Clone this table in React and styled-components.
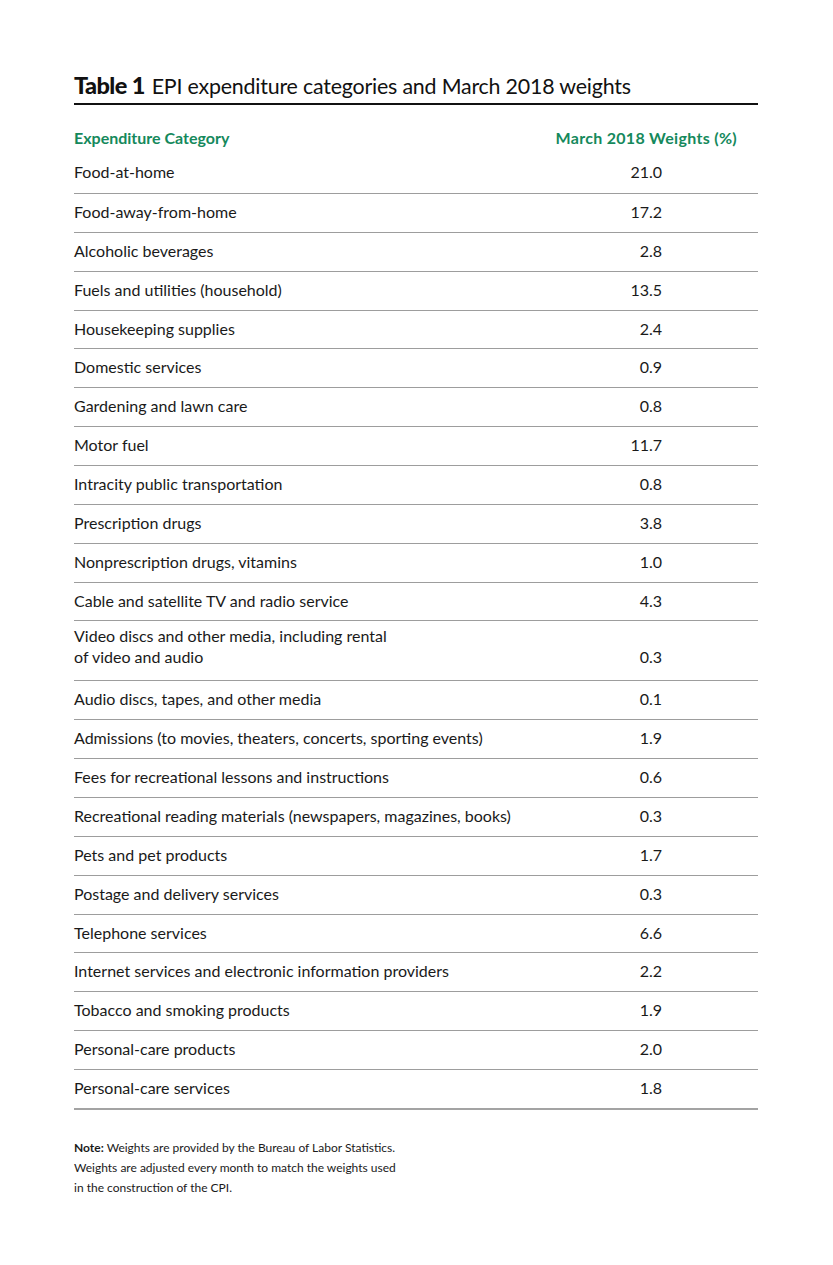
import React from "react";
import styled, { createGlobalStyle } from "styled-components";

const Global = createGlobalStyle`
  html, body { margin: 0; padding: 0; background: #fff; }
  body { font-family: Lato, "Open Sans", sans-serif; color: #1a1a1a; }
`;

const Page = styled.div`
  width: 833px;
  min-height: 1265px;
  box-sizing: border-box;
  padding: 70px 75px 0 74px;
`;

const Title = styled.h1`
  margin: 0;
  padding-bottom: 2px;
  border-bottom: 2px solid #111;
  font-size: 21.4px;
  line-height: 30px;
  font-weight: 400;
  color: #111;
  letter-spacing: -0.2px;
`;

const TitleLabel = styled.span`
  font-weight: 900;
  font-size: 23.5px;
  margin-right: 7px;
  letter-spacing: -0.6px;
`;

const Table = styled.div`
  display: flex;
  flex-direction: column;
  border-bottom: 2px solid #a3a3a3;
`;

const Row = styled.div`
  display: grid;
  grid-template-columns: 1fr 240px;
  align-items: ${(p) => (p.$tall ? "end" : "center")};
  min-height: ${(p) => (p.$header ? "46px" : p.$first ? "42px" : "38.86px")};
  padding: ${(p) =>
    p.$tall ? "4px 0 13px" : p.$header ? "18px 0 0" : p.$first ? "0 0 2px" : "0 0 3px"};
  border-top: ${(p) => (p.$first || p.$header ? "none" : "1px solid #9d9d9d")};
  font-size: 16px;
  line-height: 21px;
  box-sizing: border-box;
`;

const HeadCell = styled.div`
  color: #15895c;
  font-weight: 700;
  white-space: nowrap;
  text-align: ${(p) => (p.$num ? "right" : "left")};
  padding-right: ${(p) => (p.$num ? "21px" : "0")};
  letter-spacing: ${(p) => (p.$num ? "0.3px" : "0")};
`;

const Cell = styled.div`
  color: #1a1a1a;
`;

const NumCell = styled.div`
  text-align: right;
  padding-right: 96px;
  color: #1a1a1a;
`;

const Note = styled.p`
  margin: 28px 0 0;
  font-size: 12px;
  line-height: 20px;
  color: #1a1a1a;
`;

const NoteLabel = styled.strong`
  font-weight: 700;
`;

const rows = [
  ["Food-at-home", "21.0"],
  ["Food-away-from-home", "17.2"],
  ["Alcoholic beverages", "2.8"],
  ["Fuels and utilities (household)", "13.5"],
  ["Housekeeping supplies", "2.4"],
  ["Domestic services", "0.9"],
  ["Gardening and lawn care", "0.8"],
  ["Motor fuel", "11.7"],
  ["Intracity public transportation", "0.8"],
  ["Prescription drugs", "3.8"],
  ["Nonprescription drugs, vitamins", "1.0"],
  ["Cable and satellite TV and radio service", "4.3"],
  [["Video discs and other media, including rental", "of video and audio"], "0.3"],
  ["Audio discs, tapes, and other media", "0.1"],
  ["Admissions (to movies, theaters, concerts, sporting events)", "1.9"],
  ["Fees for recreational lessons and instructions", "0.6"],
  ["Recreational reading materials (newspapers, magazines, books)", "0.3"],
  ["Pets and pet products", "1.7"],
  ["Postage and delivery services", "0.3"],
  ["Telephone services", "6.6"],
  ["Internet services and electronic information providers", "2.2"],
  ["Tobacco and smoking products", "1.9"],
  ["Personal-care products", "2.0"],
  ["Personal-care services", "1.8"],
];

export default function App() {
  return (
    <Page>
      <Global />
      <Title>
        <TitleLabel>Table 1</TitleLabel>EPI expenditure categories and March 2018 weights
      </Title>
      <Table>
        <Row $header>
          <HeadCell>Expenditure Category</HeadCell>
          <HeadCell $num>March 2018 Weights (%)</HeadCell>
        </Row>
        {rows.map(([label, value], i) => {
          const tall = Array.isArray(label);
          return (
            <Row key={i} $first={i === 0} $tall={tall}>
              <Cell>
                {tall ? (
                  <>
                    {label[0]}
                    <br />
                    {label[1]}
                  </>
                ) : (
                  label
                )}
              </Cell>
              <NumCell>{value}</NumCell>
            </Row>
          );
        })}
      </Table>
      <Note>
        <NoteLabel>Note:</NoteLabel> Weights are provided by the Bureau of Labor Statistics.
        <br />
        Weights are adjusted every month to match the weights used
        <br />
        in the construction of the CPI.
      </Note>
    </Page>
  );
}
